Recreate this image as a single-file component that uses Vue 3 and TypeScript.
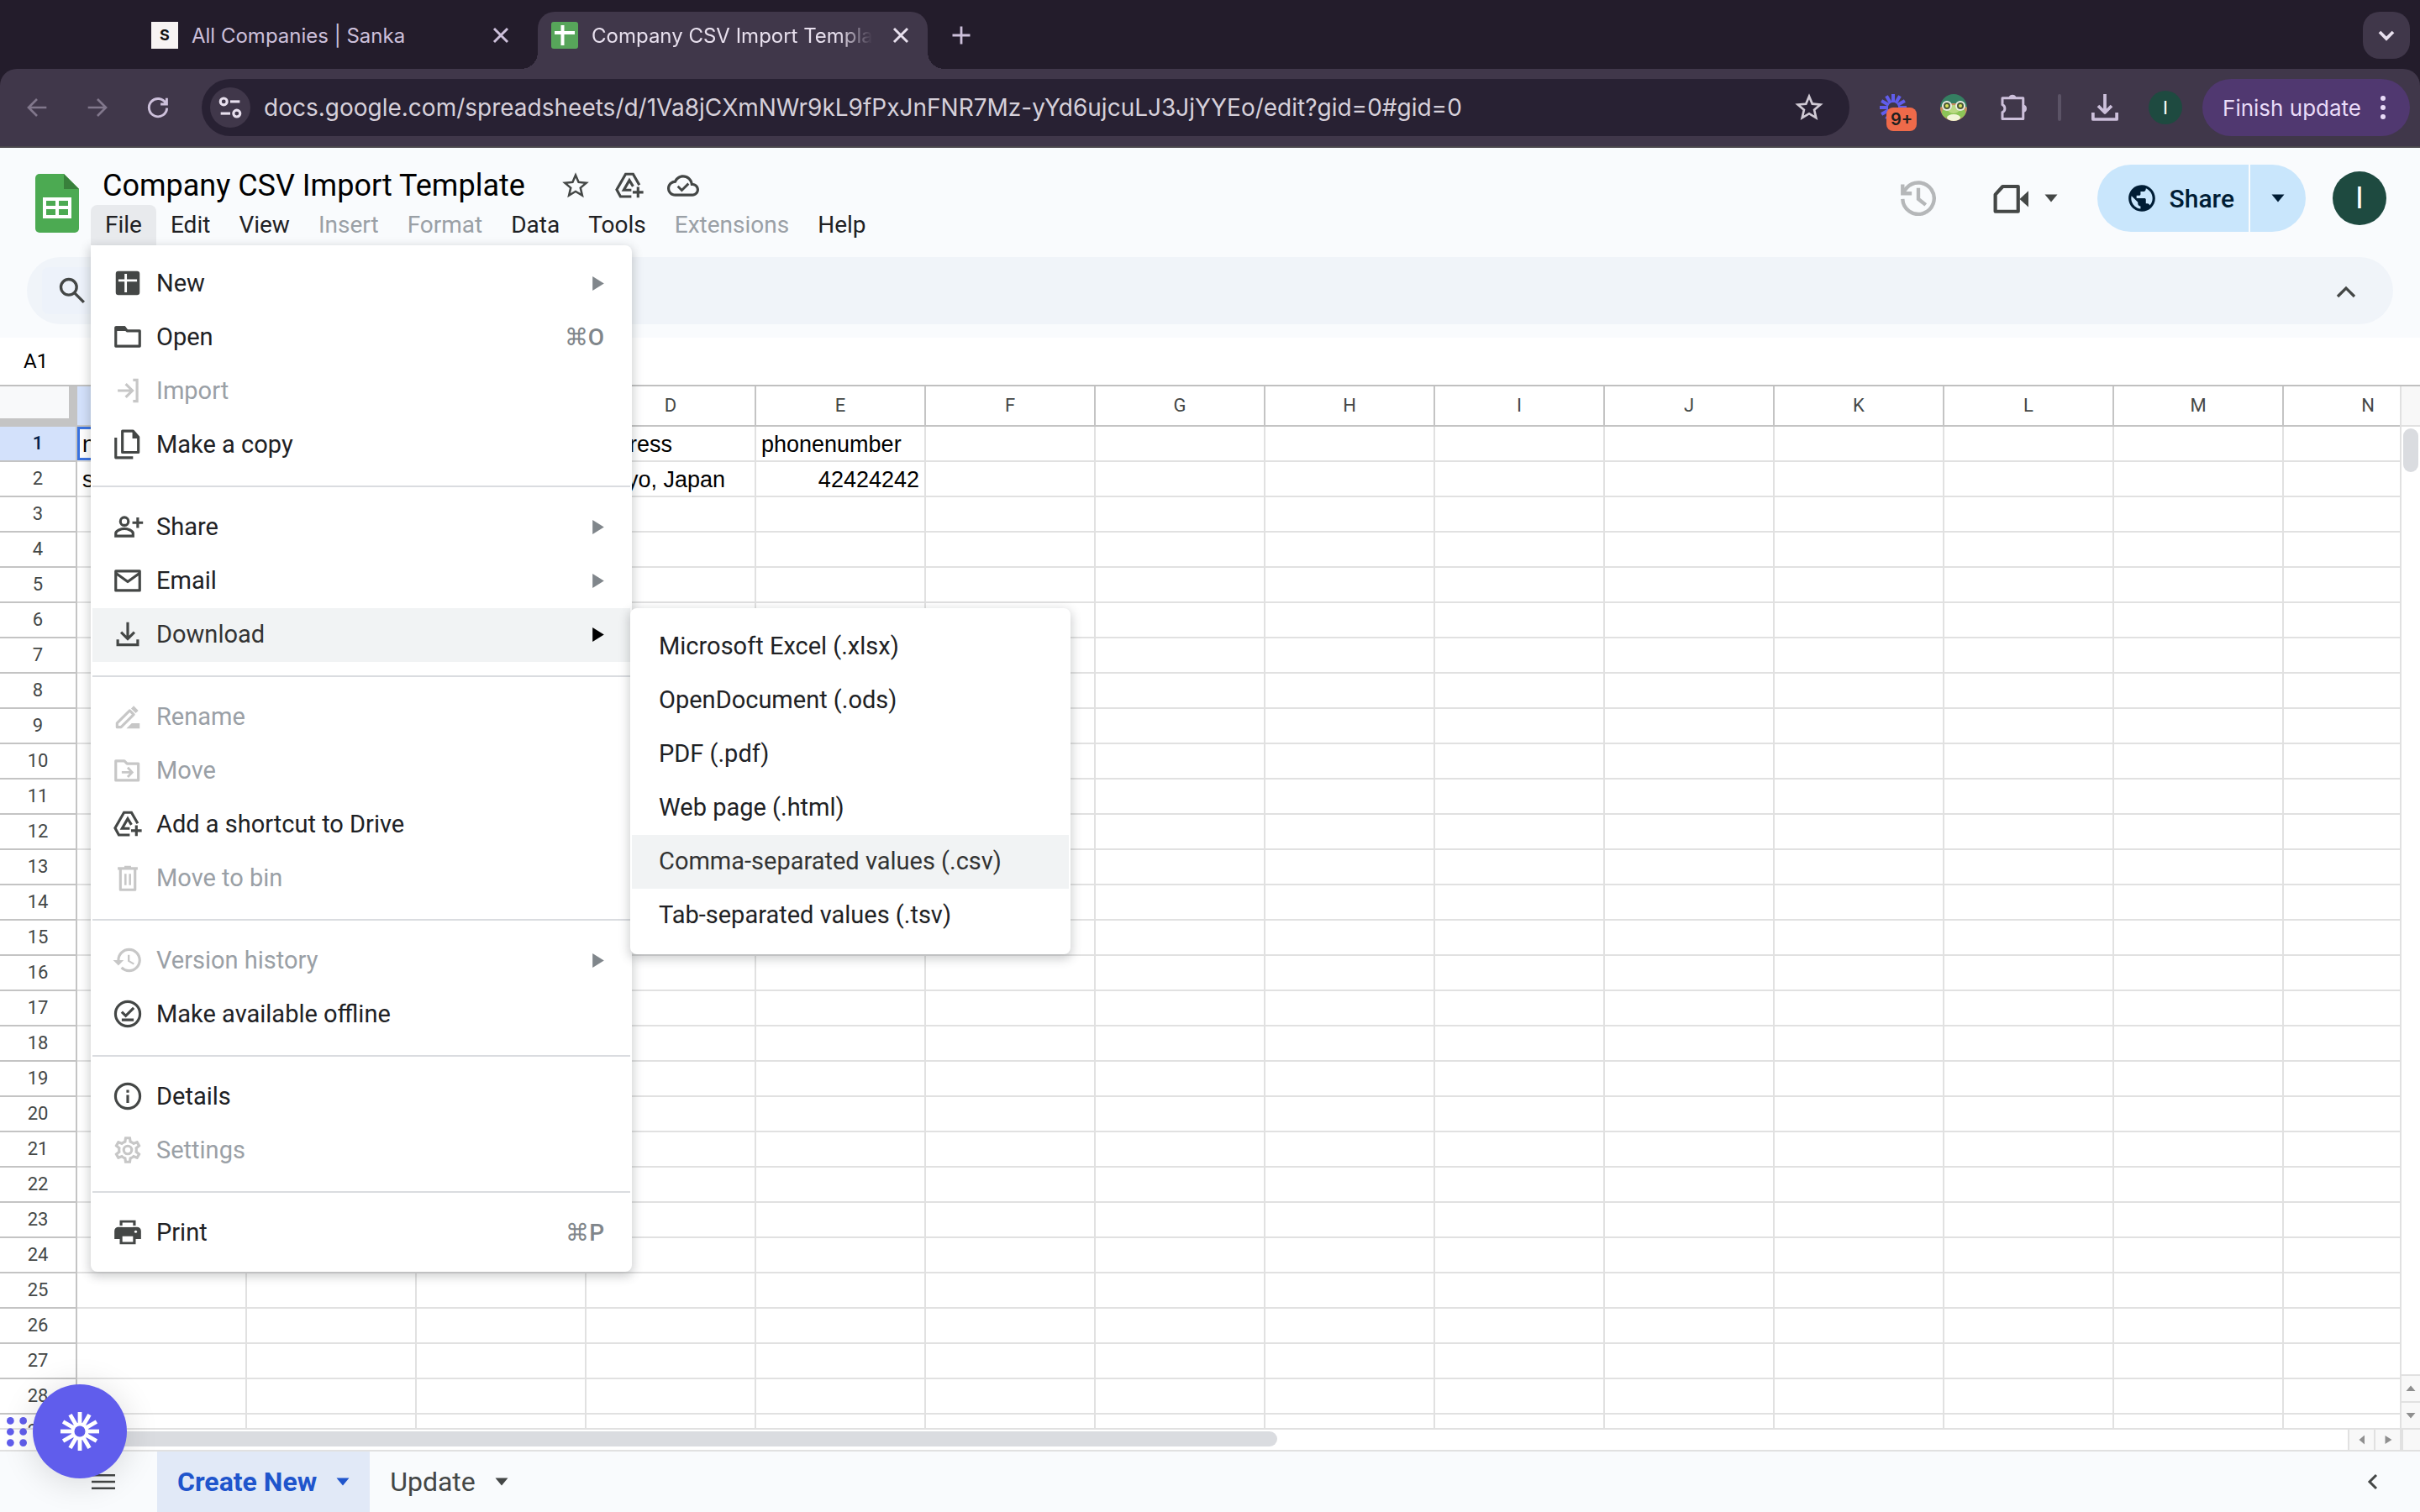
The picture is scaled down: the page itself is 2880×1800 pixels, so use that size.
<script setup lang="ts">
import { ref } from 'vue'

interface MenuEntry {
  label: string
  icon: string
  shortcut?: string
  submenu?: boolean
  disabled?: boolean
  open?: boolean
}

const icons: Record<string, string> = {
  close: '<path d="M6 6l12 12M18 6L6 18" stroke="currentColor" stroke-width="2.2" fill="none"/>',
  plus: '<path d="M12 3v18M3 12h18" stroke="currentColor" stroke-width="2.4" fill="none"/>',
  down: '<path d="M6 9l6 6 6-6" stroke="currentColor" stroke-width="2.8" fill="none"/>',
  up: '<path d="M6 15l6-6 6 6" stroke="currentColor" stroke-width="2" fill="none"/>',
  left: '<path d="M16 4l-8 8 8 8" stroke="currentColor" stroke-width="3" fill="none"/>',
  back: '<path d="M20.500 12H5M12 4.500L4.500 12l7.500 7.500" stroke="currentColor" stroke-width="2" fill="none"/>',
  forward: '<path d="M3.500 12H19M12 4.500l7.500 7.500-7.500 7.500" stroke="currentColor" stroke-width="2" fill="none"/>',
  reload: '<path d="M19 8.200A8 8 0 1 0 20 12.500M19.800 3.500v5.500h-5.500" stroke="currentColor" stroke-width="2.200" fill="none"/>',
  site: '<g stroke="currentColor" stroke-width="2.200" fill="none"><circle cx="6.500" cy="7" r="2.800"/><path d="M12 7h8"/><circle cx="17.500" cy="17" r="2.800"/><path d="M4 17h8"/></g>',
  star: '<path fill="currentColor" d="M22 9.240l-7.190-.620L12 2 9.190 8.630 2 9.240l5.460 4.730L5.820 21 12 17.270 18.180 21l-1.630-7.030L22 9.240zM12 15.400l-3.760 2.270 1-4.280-3.320-2.880 4.380-.380L12 6.100l1.710 4.040 4.380.380-3.320 2.880 1 4.280L12 15.400z"/>',
  puzzle: '<path fill="none" stroke="currentColor" stroke-width="2" stroke-linejoin="round" d="M4 4.500h16.500V21H4v-5.200a3.300 3.300 0 0 0 0-6z"/><path fill="currentColor" d="M9 4a3.200 3.200 0 0 1 6 0zM21 9.800a3.100 3.100 0 0 1 0 6z"/>',
  tray: '<path fill="none" stroke="currentColor" stroke-width="2.800" stroke-linejoin="round" d="M12 0v16M6 10.500l6 6 6-6M1.400 16.500v6h21.200v-6"/>',
  drive: '<g fill="none" stroke="currentColor" stroke-width="2"><path d="M19.500 11.500L14.800 3.300H9.200L2.500 15l2.800 5.200h8.200"/><path d="M14.800 12.500L12 8l-4.200 7.300h5.700"/><path d="M18.500 13v8M14.500 17h8"/></g>',
  cloud: '<path fill="currentColor" d="M19.350 10.040C18.670 6.590 15.640 4 12 4 9.110 4 6.600 5.640 5.350 8.040 2.340 8.360 0 10.910 0 14c0 3.310 2.690 6 6 6h13c2.760 0 5-2.240 5-5 0-2.640-2.050-4.780-4.650-4.960zM19 18H6c-2.210 0-4-1.790-4-4 0-2.050 1.530-3.760 3.560-3.970l1.070-.110.500-.950C8.080 7.140 9.940 6 12 6c2.620 0 4.880 1.860 5.390 4.430l.300 1.500 1.530.110c1.560.100 2.780 1.410 2.780 2.960 0 1.650-1.350 3-3 3z"/><path d="M8 12.500l3 3 5-5" fill="none" stroke="currentColor" stroke-width="1.800"/>',
  clock: '<g fill="none" stroke="currentColor" stroke-width="2.500"><path d="M1.300 12.500A10.700 10.700 0 1 0 4 5L1.500 8"/><path d="M1.300 2.500v6.200h6.200M12 5v7.500l5 4"/></g>',
  video: '<path fill="none" stroke="currentColor" stroke-width="2.400" stroke-linejoin="round" d="M6.500 4H17v17H1.500V9.500z"/><path fill="currentColor" d="M18 12.500L24 7v11z"/>',
  globe: '<path fill="currentColor" d="M12 2C6.480 2 2 6.480 2 12s4.480 10 10 10 10-4.480 10-10S17.520 2 12 2zm-1 17.930c-3.950-.490-7-3.850-7-7.930 0-.620.080-1.210.210-1.790L9 15v1c0 1.100.900 2 2 2v1.930zm6.900-2.540c-.260-.810-1-1.390-1.900-1.390h-1v-3c0-.550-.450-1-1-1H8v-2h2c.550 0 1-.450 1-1V7h2c1.100 0 2-.900 2-2v-.410c2.930 1.190 5 4.060 5 7.410 0 2.080-.800 3.970-2.100 5.390z"/>',
  search: '<g fill="none" stroke="currentColor" stroke-width="2"><circle cx="9.500" cy="9.500" r="5.600"/><path d="M13.700 13.700l6.600 6.600"/></g>',
  sheet: '<rect x="3" y="3" width="18" height="18" rx="2" fill="currentColor"/><path d="M5 10h14M10.500 5v14" stroke="#fff" stroke-width="1.800"/>',
  folder: '<path fill="none" stroke="currentColor" stroke-width="2" stroke-linejoin="round" d="M3 5h6.500l2 2.500H21V19H3z"/><path fill="currentColor" d="M3 4h7l2.500 3.500H3z"/>',
  importIn: '<path fill="none" stroke="currentColor" stroke-width="2" d="M4.500 12H15M10.500 7l5 5-5 5M16 4h3v16h-3"/>',
  copy: '<g fill="none" stroke="currentColor" stroke-width="2" stroke-linejoin="round"><path d="M8 2h8l4 4.500V18H8z"/><path d="M3 7v15h13"/></g><path fill="currentColor" d="M15.500 2v5.500H21z"/>',
  share: '<g fill="none" stroke="currentColor" stroke-width="2"><circle cx="9.500" cy="8" r="3"/><path d="M3 19v-2c0-2 4-3.500 6.500-3.500S16 15 16 17v2zM19.500 5v8M15.500 9h8"/></g>',
  mail: '<path fill="none" stroke="currentColor" stroke-width="2" stroke-linejoin="round" d="M3 5h18v14.500H3zM3 6.500l9 6.500 9-6.500"/>',
  download: '<path fill="none" stroke="currentColor" stroke-width="2" d="M12 3v12M7 10.500l5 5 5-5M4.500 16v4h15v-4"/>',
  rename: '<g fill="none" stroke="currentColor" stroke-width="2" stroke-linejoin="round"><path d="M4 20v-3L13.500 7.500l3 3L7 20z"/></g><path fill="currentColor" d="M14.500 6l2-2 3.500 3.500-2 2zM11 21l4-4h6v4z"/>',
  move: '<path fill="none" stroke="currentColor" stroke-width="2" stroke-linejoin="round" d="M3 5h6.500l2 2H20v12.500H3z"/><path fill="none" stroke="currentColor" stroke-width="1.800" d="M7.500 13.500H15M12 10l3.300 3.500L12 17"/>',
  trash: '<g fill="none" stroke="currentColor" stroke-width="2" stroke-linejoin="round"><path d="M6.500 5v16h11V5M4.500 5h15M9.500 4h5"/><path d="M10.300 9v8.500M13.700 9v8.500" stroke-width="1.600"/></g>',
  history: '<path fill="currentColor" d="M13 3c-4.970 0-9 4.030-9 9H1l3.890 3.890.070.140L9 12H6c0-3.870 3.130-7 7-7s7 3.130 7 7-3.130 7-7 7c-1.930 0-3.680-.790-4.940-2.060l-1.420 1.420C8.270 19.990 10.510 21 13 21c4.970 0 9-4.030 9-9s-4.030-9-9-9zm-1 5v5l4.280 2.540.720-1.210-3.500-2.080V8H12z"/>',
  offline: '<g fill="none" stroke="currentColor" stroke-width="2"><circle cx="12" cy="12" r="9.200"/><path d="M7.500 10.500l3 3 6-6M7.500 16.500h9"/></g>',
  info: '<circle cx="12" cy="12" r="9.200" fill="none" stroke="currentColor" stroke-width="2"/><path d="M12 11v6M12 7.300v2" stroke="currentColor" stroke-width="2"/>',
  gear: '<path fill="currentColor" d="M19.430 12.980c.040-.320.070-.640.070-.980s-.030-.660-.070-.980l2.110-1.650c.190-.150.240-.420.120-.640l-2-3.460c-.090-.160-.260-.250-.440-.250-.060 0-.120.010-.170.030l-2.490 1c-.520-.400-1.080-.730-1.690-.980l-.380-2.650C14.460 2.180 14.250 2 14 2h-4c-.250 0-.460.180-.490.420l-.380 2.650c-.610.250-1.170.590-1.690.980l-2.490-1c-.060-.020-.120-.030-.180-.030-.170 0-.340.090-.430.250l-2 3.460c-.130.220-.070.490.120.640l2.110 1.650c-.040.320-.070.650-.070.980s.030.660.070.980l-2.110 1.650c-.190.150-.240.420-.120.640l2 3.460c.090.160.260.250.440.250.060 0 .120-.010.170-.030l2.490-1c.520.400 1.080.730 1.690.980l.380 2.650c.030.240.240.420.490.420h4c.250 0 .460-.180.490-.420l.380-2.650c.610-.250 1.170-.590 1.690-.980l2.490 1c.060.020.120.030.180.030.170 0 .340-.090.430-.250l2-3.460c.120-.220.070-.490-.120-.640l-2.110-1.650zm-1.980-1.710c.040.310.050.520.050.730 0 .210-.020.430-.050.730l-.140 1.130.890.700 1.080.840-.700 1.210-1.270-.510-1.040-.420-.900.680c-.430.320-.840.560-1.250.730l-1.060.430-.160 1.130-.200 1.350h-1.400l-.190-1.350-.160-1.130-1.060-.430c-.430-.180-.830-.410-1.230-.710l-.910-.700-1.060.430-1.270.510-.700-1.210 1.080-.840.890-.700-.140-1.130c-.030-.310-.050-.540-.050-.740s.020-.430.050-.730l.140-1.130-.890-.700-1.080-.840.700-1.210 1.270.510 1.040.420.900-.680c.430-.320.840-.560 1.250-.730l1.060-.430.160-1.130.200-1.350h1.390l.190 1.350.160 1.130 1.060.430c.430.180.830.410 1.230.710l.910.700 1.060-.430 1.270-.510.700 1.210-1.070.850-.890.700.140 1.130z"/><circle cx="12" cy="12" r="3" fill="none" stroke="currentColor" stroke-width="2"/>',
  print: '<path fill="currentColor" d="M6 3h12v4H6zM5 8h14a3 3 0 0 1 3 3v6h-4v4H6v-4H2v-6a3 3 0 0 1 3-3z"/><path fill="#fff" d="M8 4.800h8V8H8zM8 15h8v4.200H8z"/><circle cx="18" cy="11.500" r="1" fill="#fff"/>',
  hamburger: '<path d="M0 3.500h24M0 12h24M0 20.500h24" stroke="currentColor" stroke-width="2.800"/>',
  caret: '<path fill="currentColor" d="M2 6h20L12 18z"/>',
  caretRight: '<path fill="currentColor" d="M5 2l16 10L5 22z"/>',
  caretUp: '<path fill="currentColor" d="M1 18h22L12 5z"/>',
  caretDown: '<path fill="currentColor" d="M1 6h22L12 19z"/>',
  caretLeft: '<path fill="currentColor" d="M18 1v22L5 12z"/>',
}

const rays = Array.from({ length: 12 }, (_, i) => i * 30)

const menuBar = [
  { label: 'Edit' },
  { label: 'View' },
  { label: 'Insert', disabled: true },
  { label: 'Format', disabled: true },
  { label: 'Data' },
  { label: 'Tools' },
  { label: 'Extensions', disabled: true },
  { label: 'Help' },
]

const fileMenu: MenuEntry[][] = [
  [
    { label: 'New', icon: 'sheet', submenu: true },
    { label: 'Open', icon: 'folder', shortcut: '⌘O' },
    { label: 'Import', icon: 'importIn', disabled: true },
    { label: 'Make a copy', icon: 'copy' },
  ],
  [
    { label: 'Share', icon: 'share', submenu: true },
    { label: 'Email', icon: 'mail', submenu: true },
    { label: 'Download', icon: 'download', submenu: true, open: true },
  ],
  [
    { label: 'Rename', icon: 'rename', disabled: true },
    { label: 'Move', icon: 'move', disabled: true },
    { label: 'Add a shortcut to Drive', icon: 'drive' },
    { label: 'Move to bin', icon: 'trash', disabled: true },
  ],
  [
    { label: 'Version history', icon: 'history', submenu: true, disabled: true },
    { label: 'Make available offline', icon: 'offline' },
  ],
  [
    { label: 'Details', icon: 'info' },
    { label: 'Settings', icon: 'gear', disabled: true },
  ],
  [{ label: 'Print', icon: 'print', shortcut: '⌘P' }],
]

const formats = [
  'Microsoft Excel (.xlsx)',
  'OpenDocument (.ods)',
  'PDF (.pdf)',
  'Web page (.html)',
  'Comma-separated values (.csv)',
  'Tab-separated values (.tsv)',
]
const hoveredFormat = ref(4)

const columns = 'ABCDEFGHIJKLMN'.split('')
const rowCount = 29
const cells: Record<string, string> = {
  A1: 'name',
  A2: 'sanka',
  D1: 'address',
  D2: 'Tokyo, Japan',
  E1: 'phonenumber',
  E2: '42424242',
}
const isNumber = (v: string | undefined) => !!v && /^\d+$/.test(v)

const url = ref('docs.google.com/spreadsheets/d/1Va8jCXmNWr9kL9fPxJnFNR7Mz-yYd6ujcuLJ3JjYYEo/edit?gid=0#gid=0')
const activeCell = ref('A1')
</script>

<template>
  <div class="window">
    <div class="tabstrip">
      <div class="tab">
        <span class="favicon favicon-s">S</span>
        <span class="tab-title">All Companies | Sanka</span>
        <button class="tab-close" aria-label="Close tab"><svg viewBox="0 0 24 24" v-html="icons.close" /></button>
      </div>
      <div class="tab active">
        <svg class="favicon" viewBox="0 0 32 32"><rect width="32" height="32" rx="3" fill="#57a55a" /><path d="M4 13h24M13.500 4v24" stroke="#fff" stroke-width="4" /></svg>
        <span class="tab-title fade">Company CSV Import Template</span>
        <button class="tab-close" aria-label="Close tab"><svg viewBox="0 0 24 24" v-html="icons.close" /></button>
      </div>
      <button class="new-tab" aria-label="New tab"><svg viewBox="0 0 24 24" v-html="icons.plus" /></button>
      <button class="tab-search" aria-label="Search tabs"><svg viewBox="0 0 24 24" v-html="icons.down" /></button>
    </div>

    <div class="browserbar">
      <div class="barrow">
        <button class="nav dim" aria-label="Back"><svg viewBox="0 0 24 24" v-html="icons.back" /></button>
        <button class="nav dim" aria-label="Forward"><svg viewBox="0 0 24 24" v-html="icons.forward" /></button>
        <button class="nav" aria-label="Reload"><svg viewBox="0 0 24 24" v-html="icons.reload" /></button>
        <div class="omnibox">
          <button class="site-info" aria-label="Site information"><svg viewBox="0 0 24 24" v-html="icons.site" /></button>
          <input v-model="url" class="url" aria-label="Address" spellcheck="false" />
          <button class="bookmark" aria-label="Bookmark"><svg viewBox="0 0 24 24" v-html="icons.star" /></button>
        </div>
        <div class="extensions">
          <button class="ext burst-ext" aria-label="Extension">
            <svg viewBox="-24 -24 48 48">
              <path v-for="a in rays" :key="a" d="M0-9V-24" stroke="#605dec" stroke-width="6" :transform="`rotate(${a})`" />
            </svg>
            <span class="badge">9+</span>
          </button>
          <button class="ext frog" aria-label="Frog extension">
            <svg viewBox="0 0 32 32">
              <clipPath id="frog-clip"><circle cx="16" cy="16" r="16" /></clipPath>
              <g clip-path="url(#frog-clip)">
                <rect width="32" height="32" fill="#357f62" />
                <path d="M0 16q16-10 32 0v16H0z" fill="#c98b5c" />
                <ellipse cx="16" cy="22" rx="14" ry="8" fill="#8cc457" />
                <ellipse cx="16" cy="18" rx="7" ry="5" fill="#b9d982" />
                <ellipse cx="16" cy="28" rx="8" ry="4" fill="#f1f5d8" />
                <circle cx="8" cy="14" r="6" fill="#e9ece4" /><circle cx="24" cy="14" r="6" fill="#e9ece4" />
                <circle cx="8" cy="14" r="4" fill="#4b5a33" /><circle cx="24" cy="14" r="4" fill="#4b5a33" />
                <circle cx="8" cy="14" r="2" fill="#dbe35b" /><circle cx="24" cy="14" r="2" fill="#dbe35b" />
              </g>
            </svg>
          </button>
          <button class="ext" aria-label="Extensions"><svg viewBox="0 0 24 24" v-html="icons.puzzle" /></button>
          <span class="divider" />
          <button class="ext tray" aria-label="Downloads"><svg viewBox="0 0 24 24" v-html="icons.tray" /></button>
          <button class="profile small" aria-label="Profile">I</button>
        </div>
        <button class="finish">Finish update<svg viewBox="0 0 8 28"><circle cx="4" cy="3" r="3" fill="currentColor" /><circle cx="4" cy="14" r="3" fill="currentColor" /><circle cx="4" cy="25" r="3" fill="currentColor" /></svg></button>
      </div>
    </div>

    <header class="docs-header">
      <svg class="logo" viewBox="0 0 52 70">
        <path d="M5 0h29l18 18v47a5 5 0 0 1-5 5H5a5 5 0 0 1-5-5V5a5 5 0 0 1 5-5z" fill="#4caa52" />
        <path d="M34 0l18 18H34z" fill="#38803b" />
        <path d="M9 28h34v25H9zM13 32v6h11v-6zM28 32v6h11v-6zM13 42v7h11v-7zM28 42v7h11v-7z" fill="#fff" fill-rule="evenodd" />
      </svg>
      <div class="doc-info">
        <div class="title-row">
          <h1>Company CSV Import Template</h1>
          <button class="title-icon" aria-label="Star"><svg viewBox="0 0 24 24" v-html="icons.star" /></button>
          <button class="title-icon" aria-label="Add shortcut"><svg viewBox="0 0 24 24" v-html="icons.drive" /></button>
          <button class="title-icon" aria-label="Saved to Drive"><svg viewBox="0 0 24 24" v-html="icons.cloud" /></button>
        </div>
        <nav class="menubar">
          <div class="menu-host">
            <button class="menu-title open">File</button>
            <div class="menu">
              <ul v-for="(group, gi) in fileMenu" :key="gi">
                <li v-for="item in group" :key="item.label">
                  <button class="item" :class="{ hover: item.open, off: item.disabled }" :disabled="item.disabled">
                    <svg class="item-icon" viewBox="0 0 24 24" v-html="icons[item.icon]" />
                    <span class="item-label">{{ item.label }}</span>
                    <span v-if="item.shortcut" class="shortcut">{{ item.shortcut }}</span>
                    <svg v-if="item.submenu" class="arrow" viewBox="5 2 16 20" v-html="icons.caretRight" />
                  </button>
                  <ul v-if="item.open" class="submenu">
                    <li v-for="(f, i) in formats" :key="f">
                      <button class="item" :class="{ hover: i === hoveredFormat }" @mouseenter="hoveredFormat = i">{{ f }}</button>
                    </li>
                  </ul>
                </li>
              </ul>
            </div>
          </div>
          <button v-for="m in menuBar" :key="m.label" class="menu-title" :disabled="m.disabled">{{ m.label }}</button>
        </nav>
      </div>
      <div class="actions">
        <button class="history" aria-label="Version history"><svg viewBox="0 0 24 24" v-html="icons.clock" /></button>
        <button class="meet" aria-label="Video call">
          <svg class="cam" viewBox="0 0 24 24" v-html="icons.video" /><svg class="caret" viewBox="0 0 24 24" v-html="icons.caret" />
        </button>
        <div class="share">
          <button class="share-main"><svg viewBox="0 0 24 24" v-html="icons.globe" />Share</button>
          <button class="share-more" aria-label="Share options"><svg class="caret" viewBox="0 0 24 24" v-html="icons.caret" /></button>
        </div>
        <button class="profile" aria-label="Account">I</button>
      </div>
    </header>

    <div class="toolbar-wrap">
      <div class="toolbar">
        <button class="search" aria-label="Search the menus"><svg viewBox="0 0 24 24" v-html="icons.search" /></button>
        <button class="collapse" aria-label="Hide the menus"><svg viewBox="0 0 24 24" v-html="icons.up" /></button>
      </div>
    </div>

    <div class="formula"><input v-model="activeCell" aria-label="Name box" /></div>

    <div class="sheet">
      <div class="grid">
        <table>
          <thead>
            <tr>
              <th class="corner" />
              <th v-for="c in columns" :key="c" class="col" :class="{ sel: c === 'A' }">{{ c }}</th>
            </tr>
          </thead>
          <tbody>
            <tr v-for="r in rowCount" :key="r">
              <th class="row" :class="{ sel: r === 1 }">{{ r }}</th>
              <td v-for="c in columns" :key="c" :class="{ num: isNumber(cells[c + r]), current: c + r === 'A1' }">{{ cells[c + r] }}</td>
            </tr>
          </tbody>
        </table>
      </div>
      <div class="vscroll">
        <div class="vhead" />
        <div class="vtrack"><div class="vthumb" /></div>
        <button aria-label="Scroll up"><svg viewBox="0 0 24 24" v-html="icons.caretUp" /></button>
        <button aria-label="Scroll down"><svg viewBox="0 0 24 24" v-html="icons.caretDown" /></button>
      </div>
    </div>
    <div class="hscroll">
      <div class="htrack"><div class="hthumb" /></div>
      <button aria-label="Scroll left"><svg viewBox="0 0 24 24" v-html="icons.caretLeft" /></button>
      <button aria-label="Scroll right"><svg viewBox="0 0 24 24" v-html="icons.caretRight" /></button>
      <div class="hcorner" />
    </div>

    <footer class="sheets">
      <button class="all-sheets" aria-label="All sheets"><svg viewBox="0 0 24 24" preserveAspectRatio="none" v-html="icons.hamburger" /></button>
      <button class="sheet-tab current-tab">Create New<svg class="caret" viewBox="0 0 24 24" v-html="icons.caret" /></button>
      <button class="sheet-tab">Update<svg class="caret" viewBox="0 0 24 24" v-html="icons.caret" /></button>
      <button class="side" aria-label="Show side panel"><svg viewBox="0 0 24 24" v-html="icons.left" /></button>
    </footer>

    <div class="launcher">
      <svg class="grip" viewBox="0 0 22 32">
        <g fill="#605dec"><circle cx="4" cy="4" r="4" /><circle cx="18" cy="4" r="4" /><circle cx="4" cy="16" r="4" /><circle cx="18" cy="16" r="4" /><circle cx="4" cy="28" r="4" /><circle cx="18" cy="28" r="4" /></g>
      </svg>
      <button aria-label="Open assistant">
        <svg viewBox="-24 -24 48 48">
          <path v-for="a in rays" :key="a" d="M0-7V-24" stroke="#fff" stroke-width="5" :transform="`rotate(${a})`" />
          <circle r="9" fill="none" stroke="#fff" stroke-width="4" />
        </svg>
      </button>
    </div>
  </div>
</template>

<style>
body {
  margin: 0;
}
</style>

<style scoped>
.window {
  position: relative;
  display: flex;
  flex-direction: column;
  height: 100vh;
  overflow: hidden;
  background: #fff;
  font-family: Roboto, "Liberation Sans", sans-serif;
  color: #202124;
}
button,
input {
  margin: 0;
  padding: 0;
  border: 0;
  background: none;
  font: inherit;
  color: inherit;
}
button {
  display: flex;
  align-items: center;
  white-space: nowrap;
}
svg {
  display: block;
  flex: none;
}
ul {
  list-style: none;
  margin: 0;
  padding: 0;
}

/* browser tabs */
.tabstrip {
  flex: none;
  display: flex;
  align-items: center;
  height: 68px;
  padding: 14px 12px 0 164px;
  background: #231c2b;
  font-family: Inter, "Liberation Sans", sans-serif;
  font-size: 24px;
}
.tab {
  position: relative;
  box-sizing: border-box;
  display: flex;
  align-items: center;
  width: 464px;
  height: 68px;
  margin-right: 12px;
  padding: 0 16px 12px;
  color: #cdc0db;
}
.tab.active {
  margin-right: 20px;
  background: #40374a;
  border-radius: 20px 20px 0 0;
  color: #e8e0ee;
}
.tab.active::before,
.tab.active::after {
  content: "";
  position: absolute;
  bottom: 0;
  width: 20px;
  height: 20px;
}
.tab.active::before {
  right: 100%;
  background: radial-gradient(circle at 0 0, #231c2b 20px, #40374a 20px);
}
.tab.active::after {
  left: 100%;
  background: radial-gradient(circle at 100% 0, #231c2b 20px, #40374a 20px);
}
.favicon {
  flex: none;
  width: 32px;
  height: 32px;
  margin-right: 16px;
}
.favicon-s {
  background: #f7f3f3;
  color: #111;
  font-weight: 700;
  font-size: 18px;
  line-height: 32px;
  text-align: center;
}
.tab-title {
  flex: 1;
  overflow: hidden;
  white-space: nowrap;
}
.fade {
  mask-image: linear-gradient(90deg, #000 88%, transparent);
}
.tab-close {
  margin-left: 18px;
}
.tab-close svg {
  width: 32px;
  height: 32px;
}
.new-tab svg {
  width: 28px;
  height: 28px;
}
.new-tab {
  padding: 0 6px 12px;
  color: #cdc0db;
}
.tab-search {
  justify-content: center;
  width: 56px;
  height: 56px;
  margin: 0 0 12px auto;
  border-radius: 20px;
  background: #40374a;
  color: #e8e0ee;
}
.tab-search svg {
  width: 32px;
  height: 32px;
}

/* address bar */
.browserbar {
  flex: none;
  background: #231c2b;
}
.barrow {
  display: flex;
  align-items: center;
  height: 92px;
  padding: 0 12px 0 24px;
  border-bottom: 2px solid #4a474c;
  border-radius: 20px 20px 0 0;
  background: #40374a;
  font-family: Inter, "Liberation Sans", sans-serif;
  color: #cdc0db;
}
.nav {
  margin-right: 32px;
}
.nav svg {
  width: 40px;
  height: 40px;
  padding: 4px;
  box-sizing: border-box;
}
.dim {
  color: #81778c;
}
.omnibox {
  flex: 1;
  display: flex;
  align-items: center;
  height: 68px;
  padding: 0 28px 0 10px;
  border-radius: 34px;
  background: #282133;
}
.site-info {
  justify-content: center;
  width: 48px;
  height: 48px;
  border-radius: 50%;
  background: #40374a;
  color: #e8e0ee;
}
.site-info svg {
  width: 34px;
  height: 34px;
}
.url {
  flex: 1;
  margin-left: 16px;
  outline: none;
  font-size: 28px;
  color: #d6d0da;
}
.bookmark svg {
  width: 40px;
  height: 40px;
}
.bookmark {
  color: #d0cad4;
}
.extensions {
  display: flex;
  align-items: center;
  gap: 36px;
  margin: 0 24px 0 36px;
}
.ext {
  position: relative;
}
.ext svg {
  width: 36px;
  height: 36px;
}
.burst-ext svg,
.frog svg,
.tray svg {
  width: 32px;
  height: 32px;
}
.burst-ext {
  width: 36px;
}
.badge {
  position: absolute;
  left: 8px;
  top: 16px;
  padding: 0 5px;
  border-radius: 8px;
  background: #ee6a4a;
  color: #1f1f1f;
  font-size: 20px;
  line-height: 28px;
  font-weight: 600;
}
.divider {
  width: 4px;
  height: 32px;
  border-radius: 2px;
  background: #5b5366;
}
.profile {
  justify-content: center;
  width: 64px;
  height: 64px;
  border-radius: 50%;
  background: #1e4a40;
  color: #fff;
  font-family: Roboto, sans-serif;
  font-size: 36px;
}
.profile.small {
  width: 40px;
  height: 40px;
  font-size: 22px;
}
.finish {
  height: 68px;
  padding: 0 28px 0 24px;
  border-radius: 34px;
  background: #503870;
  color: #e9dbf8;
  font-size: 26px;
}
.finish svg {
  width: 8px;
  height: 28px;
  margin-left: 22px;
}

/* document header */
.docs-header {
  flex: none;
  display: flex;
  align-items: flex-start;
  height: 130px;
  padding: 0 40px 0 42px;
  background: #f9fbfd;
}
.logo {
  width: 52px;
  height: 70px;
  margin: 31px 14px 0 0;
}
.doc-info {
  padding-top: 22px;
}
.title-row {
  display: flex;
  align-items: center;
  height: 46px;
  padding-left: 14px;
}
h1 {
  margin: 0 28px 0 0;
  font-size: 36px;
  line-height: 46px;
  font-weight: 400;
  color: #000;
  white-space: nowrap;
}
.title-icon {
  margin: 0 13px;
  color: #444746;
}
.title-icon svg {
  width: 38px;
  height: 38px;
}
.menubar {
  display: flex;
  height: 48px;
}
.menu-host {
  position: relative;
}
.menu-title {
  height: 48px;
  padding: 0 17px 2px;
  font-size: 28px;
}
.menu-title:disabled {
  color: #9aa0a6;
}
.menu-title.open {
  border-radius: 8px 8px 0 0;
  background: #e8eaed;
}
.menu {
  position: absolute;
  z-index: 5;
  top: 100%;
  left: 0;
  box-sizing: border-box;
  width: 644px;
  padding: 14px 2px;
  border-radius: 0 8px 8px 8px;
  background: #fff;
  box-shadow: 0 4px 12px 2px rgba(60, 64, 67, 0.24);
}
.menu > ul + ul {
  margin-top: 16px;
  padding-top: 16px;
  border-top: 2px solid #dadce0;
}
li {
  position: relative;
}
.item {
  width: 100%;
  height: 64px;
  padding: 0 31px 2px 23px;
  font-size: 29px;
  color: #202124;
}
.item-icon {
  width: 38px;
  height: 38px;
  margin-right: 15px;
  color: #444746;
}
.item-label {
  flex: 1;
  text-align: left;
}
.item.off {
  color: #9aa0a6;
}
.off .item-icon {
  color: #c7c7c7;
}
.item.hover {
  background: #f1f3f4;
  color: #333;
}
.arrow {
  width: 14px;
  height: 17px;
  color: #80868b;
}
.hover .arrow {
  color: #000;
}
.shortcut {
  color: #80868b;
  font-size: 28px;
  font-weight: 500;
}
.submenu {
  position: absolute;
  z-index: 6;
  top: 0;
  left: 100%;
  box-sizing: border-box;
  width: 524px;
  padding: 14px 2px;
  border-radius: 8px;
  background: #fff;
  box-shadow: 0 4px 12px 2px rgba(60, 64, 67, 0.24);
}
.submenu .item {
  padding: 0 32px 2px;
}
.actions {
  display: flex;
  align-items: center;
  height: 80px;
  margin: 20px 0 0 auto;
}
.history {
  margin-right: 68px;
  color: #b5b7b9;
}
.history svg,
.cam {
  width: 42px;
  height: 42px;
}
.meet {
  margin-right: 46px;
  color: #444746;
}
.caret {
  width: 18px;
  height: 18px;
}
.meet .caret {
  margin-left: 18px;
}
.share {
  display: flex;
  gap: 2px;
  margin-right: 32px;
  color: #001d35;
  font-size: 30px;
  font-weight: 500;
}
.share button {
  height: 80px;
  background: #c9e6fc;
}
.share-main {
  padding: 0 17px 0 34px;
  border-radius: 40px 0 0 40px;
}
.share-main svg {
  width: 38px;
  height: 38px;
  margin-right: 14px;
}
.share-more {
  width: 66px;
  justify-content: center;
  border-radius: 0 40px 40px 0;
}

/* toolbar */
.toolbar-wrap {
  flex: none;
  padding: 0 32px 16px;
  background: #f9fbfd;
}
.toolbar {
  display: flex;
  align-items: center;
  height: 80px;
  border-radius: 40px;
  background: #f0f4f9;
  color: #444746;
}
.search {
  height: 56px;
  margin-left: 18px;
  padding: 0 14px 0 16px;
  border-radius: 8px;
  background: #edf2fa;
}
.search svg {
  width: 40px;
  height: 40px;
}
.collapse {
  margin: 4px 36px 0 auto;
}
.collapse svg {
  width: 40px;
  height: 40px;
}
.formula {
  flex: none;
  display: flex;
  align-items: center;
  height: 56px;
  padding-left: 28px;
  border-bottom: 2px solid #c0c0c0;
}
.formula input {
  width: 60px;
  outline: none;
  font-size: 24px;
  color: #000;
}

/* spreadsheet */
.sheet {
  flex: 1;
  display: flex;
  min-height: 0;
  overflow: hidden;
}
.grid {
  flex: 1;
  min-width: 0;
  overflow: hidden;
}
table {
  table-layout: fixed;
  width: 2920px;
  border-collapse: separate;
  border-spacing: 0;
}
th,
td {
  box-sizing: border-box;
  padding: 0;
  overflow: hidden;
  white-space: nowrap;
}
th {
  border-right: 2px solid #c4c4c4;
  border-bottom: 2px solid #c4c4c4;
  font-weight: 400;
  font-size: 22px;
  color: #444746;
}
.col {
  width: 202px;
  height: 48px;
  padding-bottom: 2px;
}
.corner {
  width: 92px;
  border-right-width: 10px;
  border-bottom-width: 10px;
  background: #f8f9fa;
}
.row {
  height: 42px;
  line-height: 38px;
}
th.sel {
  background: #d3e1fb;
  color: #041e49;
}
.row.sel {
  font-weight: 500;
}
td {
  height: 42px;
  padding: 2px 6px 0;
  border-right: 2px solid #e1e1e1;
  border-bottom: 2px solid #e1e1e1;
  font-family: "Liberation Sans", Arial, sans-serif;
  font-size: 27px;
  line-height: 36px;
  color: #000;
}
td.num {
  text-align: right;
}
td.current {
  box-shadow: inset 0 0 0 3px #3871e0;
}
.vscroll {
  flex: none;
  display: flex;
  flex-direction: column;
  width: 22px;
  border-left: 2px solid #e1e1e1;
  color: #8f8f8f;
}
.vhead {
  height: 46px;
  border-bottom: 2px solid #e1e1e1;
  background: #f8f8f8;
}
.vtrack {
  flex: 1;
  padding: 2px;
}
.vthumb {
  height: 52px;
  border-radius: 9px;
  background: #dadce0;
}
.vscroll button,
.hscroll button {
  justify-content: center;
  height: 32px;
  border-top: 2px solid #e1e1e1;
  background: #f8f8f8;
}
.vscroll svg,
.hscroll svg {
  width: 12px;
  height: 12px;
}
.hscroll {
  flex: none;
  display: flex;
  height: 24px;
  border-top: 2px solid #e1e1e1;
  border-bottom: 2px solid #e1e1e1;
  color: #8f8f8f;
}
.htrack {
  flex: 1;
  padding: 2px 0 2px 84px;
}
.hthumb {
  width: 53%;
  height: 18px;
  border-radius: 9px;
  background: #dadce0;
}
.hscroll button {
  width: 31px;
  height: 24px;
  border-top: 0;
  border-left: 2px solid #e1e1e1;
}
.hcorner {
  width: 20px;
  border-left: 4px solid #e1e1e1;
  background: #f8f8f8;
}

/* sheet tabs */
.sheets {
  flex: none;
  display: flex;
  height: 72px;
  padding: 0 44px 0 109px;
  background: #f9fbfd;
  color: #444746;
}
.all-sheets {
  margin-right: 50px;
}
.all-sheets svg {
  width: 28px;
  height: 22px;
}
.side {
  margin-left: auto;
}
.side svg {
  width: 24px;
  height: 24px;
}
.sheet-tab {
  padding: 0 23px 0 24px;
  font-size: 32px;
}
.sheet-tab .caret {
  margin-left: 22px;
}
.current-tab {
  background: #e1e9f7;
  color: #1f55cc;
  font-weight: 700;
}

/* floating launcher */
.launcher {
  position: absolute;
  z-index: 4;
  left: 0;
  bottom: 40px;
  display: flex;
  align-items: center;
  gap: 7px;
  padding-left: 8px;
}
.grip {
  width: 24px;
  height: 35px;
}
.launcher button {
  justify-content: center;
  width: 112px;
  height: 112px;
  border-radius: 50%;
  background: #605dec;
  box-shadow: 0 4px 40px rgba(0, 0, 0, 0.14);
}
.launcher button svg {
  width: 46px;
  height: 46px;
}
</style>
